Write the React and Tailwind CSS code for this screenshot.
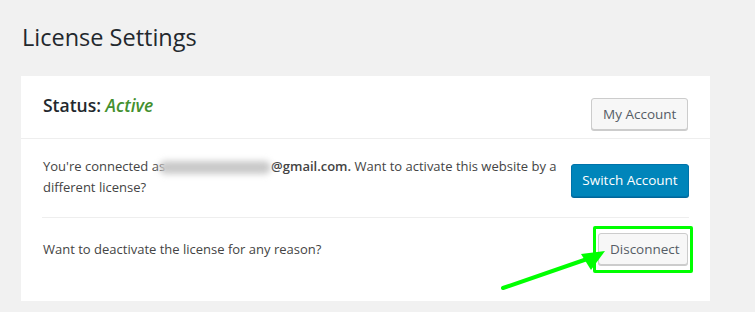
import React from 'react';

const font = { fontFamily: '"Open Sans", "Noto Sans", sans-serif' };

const SecondaryButton = ({ children, className = '' }) => (
    <button className={`h-[32px] px-[11px] rounded-[3px] border border-[#cccccc] bg-[#f7f7f7] text-[13.5px] text-[#555d66] shadow-[0_1px_0_#cccccc] whitespace-nowrap ${className}`}>
        {children}
    </button>
);

const App = () => {
    return (
        <div className="w-[755px] h-[312px] bg-[#f1f1f1] overflow-hidden relative" style={font}>
            <div className="pl-[21px] pt-[20px] w-[710px]">
                {/* Page title */}
                <h1 className="text-[23.5px] leading-[34px] text-[#23282d] pl-[1px] mb-[22px]">License Settings</h1>

                {/* Card */}
                <div className="bg-white h-[225px]">
                    {/* Header row */}
                    <div className="flex justify-between items-start px-[22px] pt-[18px] pb-[8px] border-b border-[#eeeeee]">
                        <h2 className="text-[17.5px] leading-[22px] font-semibold text-[#23282d]">
                            Status: <em className="text-[#43902f] font-semibold">Active</em>
                        </h2>
                        <SecondaryButton className="mt-[4px] w-[97px]">My Account</SecondaryButton>
                    </div>

                    <div className="px-[21px]">
                        {/* Connected row */}
                        <div className="flex justify-between items-start pt-[17px] pb-[19px] border-b border-[#eeeeee]">
                            <p className="w-[524px] pl-[1px] text-[13px] leading-[21px] text-[#444444]">
                                You're connected as<span className="inline-block align-middle w-[112px] h-[13px] -ml-[6px] rounded-full bg-[#c9c9c9] blur-[3px]"></span><strong className="font-semibold">@gmail.com.</strong> Want to activate this website by a different license?
                            </p>
                            <button className="mt-[8px] w-[118px] h-[33px] rounded-[3px] border border-[#0073aa] bg-[#0085ba] text-white text-[13.5px] shadow-[0_1px_0_#006799] whitespace-nowrap">
                                Switch Account
                            </button>
                        </div>

                        {/* Disconnect row */}
                        <div className="flex justify-between items-center pt-[15px]">
                            <p className="pl-[1px] text-[13px] leading-[21px] text-[#444444]">Want to deactivate the license for any reason?</p>
                            <SecondaryButton className="w-[90px] mr-[1px]">Disconnect</SecondaryButton>
                        </div>
                    </div>
                </div>
            </div>

            {/* Annotation: highlight box */}
            <div className="absolute left-[593px] top-[226px] w-[100px] h-[47px] border-[3px] border-[#00ff00] rounded-[2px]"></div>

            {/* Annotation: arrow */}
            <svg className="absolute left-0 top-0" width="755" height="312" viewBox="0 0 755 312">
                <line x1="503" y1="288" x2="590" y2="258" stroke="#00ff00" strokeWidth="4" strokeLinecap="round" />
                <polygon points="605,251 581,254 591,270" fill="#00ff00" />
            </svg>
        </div>
    );
};

export default App;
